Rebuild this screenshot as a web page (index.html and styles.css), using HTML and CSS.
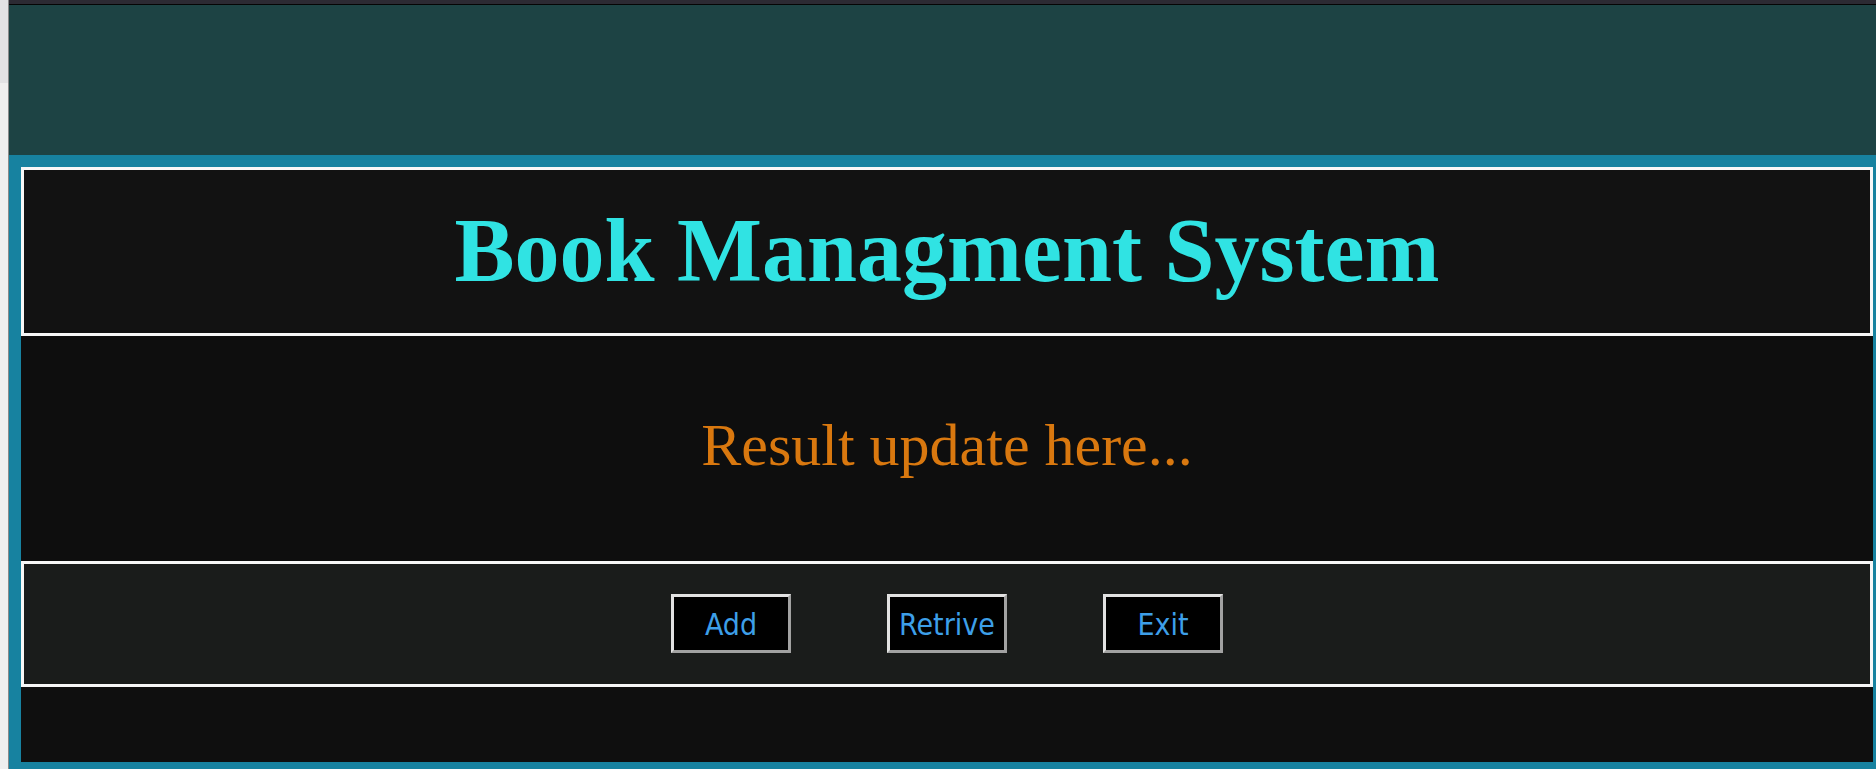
FILE: index.html
```html
<!DOCTYPE html>
<html lang="en">
<head>
<meta charset="utf-8">
<title>Book Managment System</title>
<link rel="stylesheet" href="styles.css">
</head>
<body>
<div class="frame">
  <div class="edge">
    <div class="edge-top"></div>
    <div class="edge-rest"></div>
  </div>
  <div class="main">
    <div class="topbar"></div>
    <div class="hero"></div>
    <div class="app">
      <header class="header">
        <h1 class="title">Book Managment System</h1>
      </header>
      <section class="result">
        <p class="result-text">Result update here...</p>
      </section>
      <section class="actions">
        <button class="btn">Add</button>
        <button class="btn">Retrive</button>
        <button class="btn">Exit</button>
      </section>
      <div class="footer"></div>
    </div>
  </div>
</div>
</body>
</html>
```

FILE: styles.css
```css
html, body {
  margin: 0;
  padding: 0;
  height: 100%;
  overflow: hidden;
  background: #0f0f0f;
}

.frame {
  display: flex;
  width: 1876px;
  height: 769px;
  overflow: hidden;
}

.edge {
  width: 8px;
  flex-shrink: 0;
  border-right: 1px solid #8a8a8a;
  display: flex;
  flex-direction: column;
}

.edge-top {
  height: 83px;
  flex-shrink: 0;
  background: #e2e2e4;
}

.edge-rest {
  flex: 1;
  background: #efefef;
}

.main {
  flex: 1;
  display: flex;
  flex-direction: column;
  min-width: 0;
}

.main > * {
  flex-shrink: 0;
}

.topbar {
  height: 4px;
  background: #2c2a33;
  border-bottom: 1px solid #050505;
}

.hero {
  height: 150px;
  background: #1d4344;
}

.app {
  background: #1782a0;
  padding: 12px 3px 12px 12px;
  display: flex;
  flex-direction: column;
}

.app > * {
  flex-shrink: 0;
}

.header {
  border: 3px solid #f7f7f7;
  background: #121212;
  padding: 36px 0 37px;
  text-align: center;
}

.title {
  margin: 0;
  font-family: "Liberation Serif", "Times New Roman", serif;
  font-weight: bold;
  font-size: 90px;
  line-height: 90px;
  color: #30e3e3;
}

.result {
  background: #0e0e0e;
  height: 225px;
  box-sizing: border-box;
  padding-top: 79px;
  text-align: center;
}

.result-text {
  margin: 0;
  font-family: "Liberation Serif", "Times New Roman", serif;
  font-size: 60px;
  line-height: 60px;
  color: #d9780f;
}

.actions {
  border: 3px solid #f7f7f7;
  background: #1a1c1b;
  padding: 30px 0 31px;
  display: flex;
  justify-content: center;
  gap: 96px;
}

.btn {
  width: 120px;
  height: 59px;
  box-sizing: border-box;
  margin: 0;
  padding: 3px 0 0;
  background: #000;
  border: 3px solid;
  border-color: #e2e2e2 #a2a2a2 #a2a2a2 #e2e2e2;
  color: #3d9fe8;
  font-family: "DejaVu Sans Condensed", "DejaVu Sans", sans-serif;
  font-stretch: condensed;
  font-size: 30px;
  line-height: 1;
  cursor: pointer;
}

.footer {
  height: 75px;
  background: #0f0f0f;
}
```
